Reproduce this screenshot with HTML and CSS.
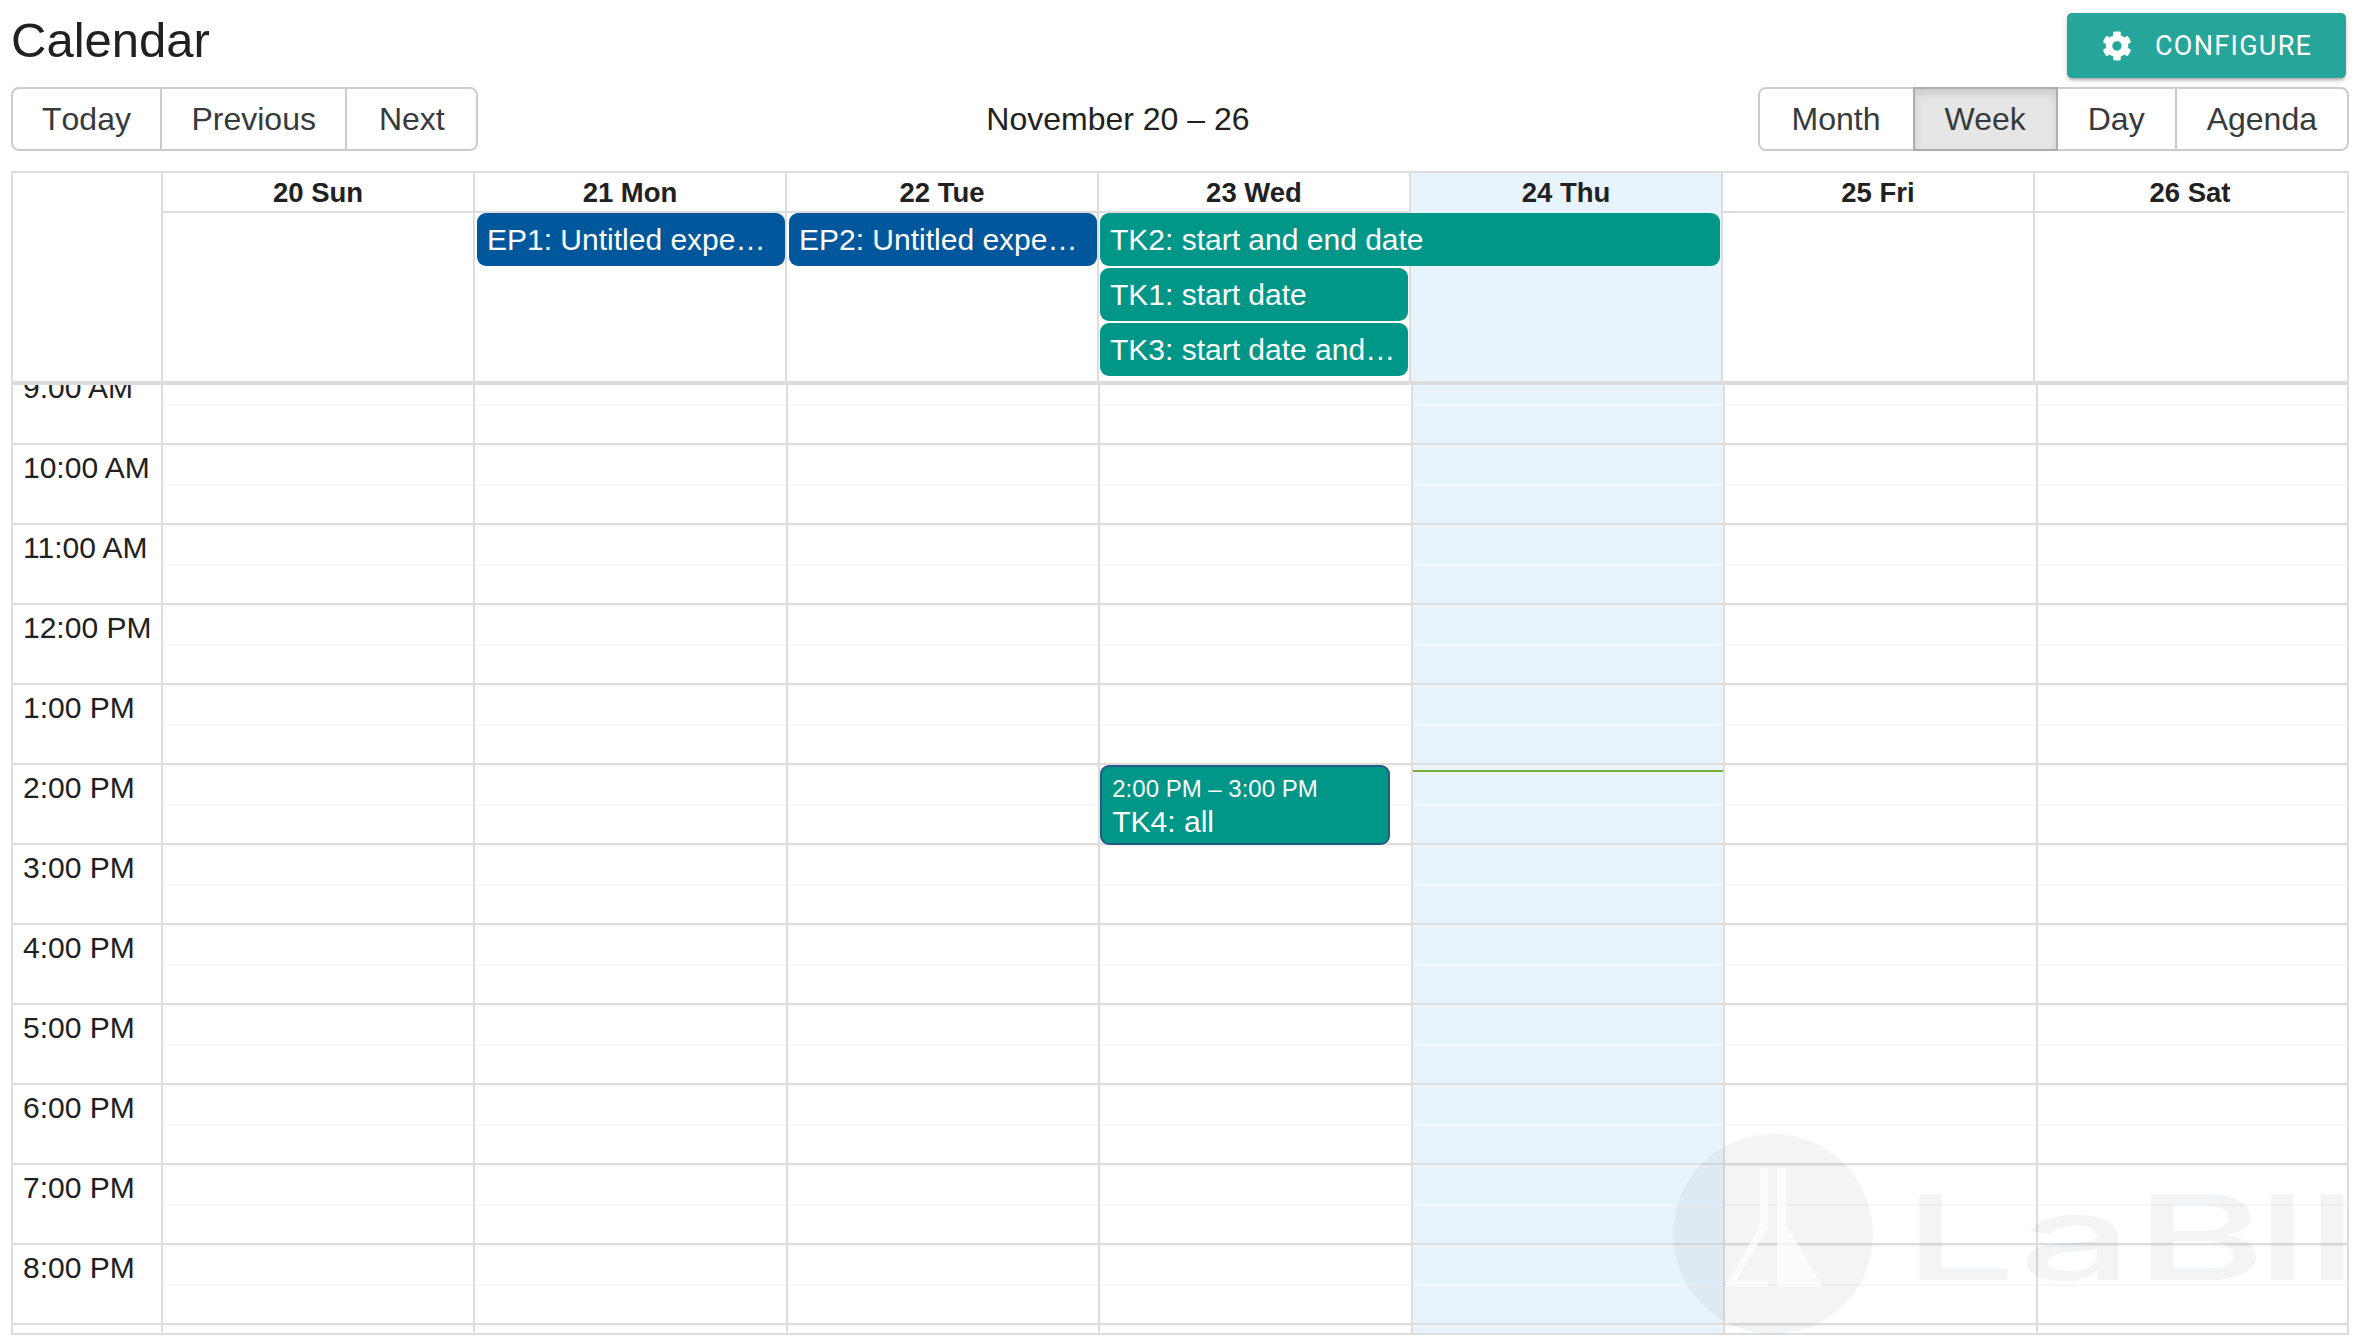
FILE: index.html
```html
<!DOCTYPE html>
<html lang="en">
<head>
<meta charset="utf-8">
<title>Calendar</title>
<link rel="stylesheet" href="styles.css">
</head>
<body>
<header class="page-head">
  <h1 class="page-title">Calendar</h1>
  <button class="configure" type="button">
    <svg class="gear" viewBox="0 0 512 512" aria-hidden="true"><path fill="currentColor" d="M487.4 315.7l-42.6-24.6c4.3-23.2 4.3-47 0-70.2l42.6-24.6c4.9-2.8 7.1-8.6 5.5-14-11.1-35.6-30-67.8-54.7-94.6-3.8-4.1-10-5.1-14.8-2.3L380.8 110c-17.9-15.4-38.5-27.3-60.8-35.1V25.8c0-5.6-3.9-10.5-9.4-11.7-36.7-8.2-74.3-7.8-109.2 0-5.5 1.2-9.4 6.1-9.4 11.7V75c-22.2 7.9-42.8 19.8-60.8 35.1L88.7 85.5c-4.9-2.8-11-1.9-14.8 2.3-24.7 26.7-43.6 58.9-54.7 94.6-1.7 5.4.6 11.2 5.5 14L67.3 221c-4.3 23.2-4.3 47 0 70.2l-42.6 24.6c-4.9 2.8-7.1 8.6-5.5 14 11.1 35.6 30 67.8 54.7 94.6 3.8 4.1 10 5.1 14.8 2.3l42.6-24.6c17.9 15.4 38.5 27.3 60.8 35.1v49.2c0 5.6 3.9 10.5 9.4 11.7 36.7 8.2 74.3 7.8 109.2 0 5.5-1.2 9.4-6.1 9.4-11.7v-49.2c22.2-7.9 42.8-19.8 60.8-35.1l42.6 24.6c4.9 2.8 11 1.9 14.8-2.3 24.7-26.7 43.6-58.9 54.7-94.6 1.5-5.5-.7-11.3-5.6-14.1zM256 336c-44.1 0-80-35.9-80-80s35.9-80 80-80 80 35.9 80 80-35.9 80-80 80z"/></svg>
    <span>CONFIGURE</span>
  </button>
</header>

<div class="toolbar">
  <div class="btn-group">
    <button class="btn btn-today" type="button">Today</button>
    <button class="btn btn-previous" type="button">Previous</button>
    <button class="btn btn-next" type="button">Next</button>
  </div>
  <div class="range">November 20 – 26</div>
  <div class="btn-group">
    <button class="btn btn-month" type="button">Month</button>
    <button class="btn active" type="button">Week</button>
    <button class="btn" type="button">Day</button>
    <button class="btn btn-agenda" type="button">Agenda</button>
  </div>
</div>

<section class="calendar">
  <div class="cal-head">
    <div class="corner"></div>
    <div class="head-main">
      <div class="head-row">
        <div class="head-cell">20 Sun</div>
        <div class="head-cell">21 Mon</div>
        <div class="head-cell">22 Tue</div>
        <div class="head-cell">23 Wed</div>
        <div class="head-cell today">24 Thu</div>
        <div class="head-cell">25 Fri</div>
        <div class="head-cell">26 Sat</div>
      </div>
      <div class="allday">
        <div class="allday-bg c1"></div>
        <div class="allday-bg c2"></div>
        <div class="allday-bg c3"></div>
        <div class="allday-bg c4"></div>
        <div class="allday-bg c5 today"></div>
        <div class="allday-bg c6"></div>
        <div class="allday-bg c7"></div>
        <div class="event blue c2 r1">EP1: Untitled experiment</div>
        <div class="event blue c3 r1">EP2: Untitled experiment</div>
        <div class="event teal span45 r1">TK2: start and end date</div>
        <div class="event teal c4 r2">TK1: start date</div>
        <div class="event teal c4 r3">TK3: start date and end date</div>
      </div>
    </div>
  </div>

  <div class="scroller">
    <div class="time-grid">
      <div class="gutter">
        <div class="hour-label">9:00 AM</div>
        <div class="hour-label">10:00 AM</div>
        <div class="hour-label">11:00 AM</div>
        <div class="hour-label">12:00 PM</div>
        <div class="hour-label">1:00 PM</div>
        <div class="hour-label">2:00 PM</div>
        <div class="hour-label">3:00 PM</div>
        <div class="hour-label">4:00 PM</div>
        <div class="hour-label">5:00 PM</div>
        <div class="hour-label">6:00 PM</div>
        <div class="hour-label">7:00 PM</div>
        <div class="hour-label">8:00 PM</div>
        <div class="hour-label">9:00 PM</div>
      </div>
      <div class="day">
        <div class="hour"></div><div class="hour"></div><div class="hour"></div><div class="hour"></div><div class="hour"></div><div class="hour"></div><div class="hour"></div><div class="hour"></div><div class="hour"></div><div class="hour"></div><div class="hour"></div><div class="hour"></div><div class="hour"></div>
      </div>
      <div class="day">
        <div class="hour"></div><div class="hour"></div><div class="hour"></div><div class="hour"></div><div class="hour"></div><div class="hour"></div><div class="hour"></div><div class="hour"></div><div class="hour"></div><div class="hour"></div><div class="hour"></div><div class="hour"></div><div class="hour"></div>
      </div>
      <div class="day">
        <div class="hour"></div><div class="hour"></div><div class="hour"></div><div class="hour"></div><div class="hour"></div><div class="hour"></div><div class="hour"></div><div class="hour"></div><div class="hour"></div><div class="hour"></div><div class="hour"></div><div class="hour"></div><div class="hour"></div>
      </div>
      <div class="day">
        <div class="hour"></div><div class="hour"></div><div class="hour"></div><div class="hour"></div><div class="hour"></div><div class="hour"></div><div class="hour"></div><div class="hour"></div><div class="hour"></div><div class="hour"></div><div class="hour"></div><div class="hour"></div><div class="hour"></div>
        <div class="timed-event">
          <div class="timed-time">2:00 PM – 3:00 PM</div>
          <div class="timed-title">TK4: all</div>
        </div>
      </div>
      <div class="day day-today">
        <div class="hour"></div><div class="hour"></div><div class="hour"></div><div class="hour"></div><div class="hour"></div><div class="hour"></div><div class="hour"></div><div class="hour"></div><div class="hour"></div><div class="hour"></div><div class="hour"></div><div class="hour"></div><div class="hour"></div>
        <div class="now-line"></div>
      </div>
      <div class="day">
        <div class="hour"></div><div class="hour"></div><div class="hour"></div><div class="hour"></div><div class="hour"></div><div class="hour"></div><div class="hour"></div><div class="hour"></div><div class="hour"></div><div class="hour"></div><div class="hour"></div><div class="hour"></div><div class="hour"></div>
      </div>
      <div class="day">
        <div class="hour"></div><div class="hour"></div><div class="hour"></div><div class="hour"></div><div class="hour"></div><div class="hour"></div><div class="hour"></div><div class="hour"></div><div class="hour"></div><div class="hour"></div><div class="hour"></div><div class="hour"></div><div class="hour"></div>
      </div>
    </div>
  </div>
</section>

<svg class="watermark" viewBox="0 0 680 204" aria-hidden="true">
  <circle class="wm-disc" cx="101" cy="102" r="100"/>
  <path class="wm-flask" d="M88 36H96V96L64 148H96V155H53L88 93Z"/>
  <path class="wm-flask" d="M105 36H114V93L151 155H105Z"/>
  <text class="wm-word" transform="translate(0 148) scale(1.7 1)" x="136 204 272 343 372" y="0">LaBII</text>
</svg>
</body>
</html>
```

FILE: styles.css
```css
* {
  box-sizing: border-box;
}

html,
body {
  height: 1344px;
  overflow: hidden;
}

body {
  position: relative;
  margin: 0;
  padding: 0 11px;
  background: #fff;
  color: #212121;
  font-family: "Liberation Sans", Arial, sans-serif;
}

.page-head {
  display: flex;
  justify-content: space-between;
  align-items: flex-start;
  height: 87px;
  padding: 13px 3px 0 0;
}

.page-title {
  margin: 0;
  font-size: 49px;
  font-weight: 400;
  line-height: 54px;
  color: #212121;
}

.configure {
  display: flex;
  align-items: center;
  gap: 23px;
  width: 279px;
  height: 65px;
  padding: 0 0 0 35px;
  border: 0;
  border-radius: 5px;
  background: #26a69a;
  box-shadow: 0 3px 3px -1px rgba(0, 0, 0, 0.25), 0 2px 6px rgba(0, 0, 0, 0.12);
  color: #fff;
  font-family: Roboto, sans-serif;
  font-size: 27px;
  font-weight: 400;
  letter-spacing: 1.3px;
}

.gear {
  width: 30px;
  height: 30px;
  flex: none;
}

.toolbar {
  display: flex;
  justify-content: space-between;
  align-items: center;
  height: 64px;
  margin-bottom: 20px;
}

.btn-group {
  display: flex;
  height: 64px;
}

.btn {
  height: 64px;
  margin-left: -2px;
  padding: 0 30px;
  border: 2px solid #ccc;
  background: #fff;
  color: #373a3c;
  font-family: inherit;
  font-size: 32px;
  line-height: 1;
}

.btn:first-child {
  margin-left: 0;
  border-radius: 8px 0 0 8px;
}

.btn:last-child {
  border-radius: 0 8px 8px 0;
}

.btn-today {
  padding: 0 29px;
  font-kerning: none;
}

.btn-previous {
  padding: 0 29.5px;
}

.btn-next {
  padding: 0 31.5px;
}

.btn-month {
  padding: 0 32px;
}

.btn.active {
  position: relative;
  border-color: #adadad;
  background: #e6e6e6;
  box-shadow: inset 0 5px 8px rgba(0, 0, 0, 0.12);
}

.range {
  font-size: 32px;
  color: #212121;
}

.calendar {
  display: flex;
  flex-direction: column;
  height: 1164px;
  border: 2px solid #ddd;
}

.cal-head {
  display: flex;
  flex: none;
  height: 212px;
  padding-right: 2px;
  border-bottom: 4px solid #ddd;
}

.corner {
  flex: none;
  width: 148px;
}

.head-main {
  display: flex;
  flex: 1;
  flex-direction: column;
  min-width: 0;
}

.head-row {
  display: grid;
  grid-template-columns: repeat(7, 1fr);
  flex: none;
  height: 40px;
  border-bottom: 2px solid #ddd;
}

.head-cell {
  border-left: 2px solid #ddd;
  font-size: 27.5px;
  font-weight: 700;
  line-height: 40px;
  text-align: center;
}

.today {
  background: #e8f4fd;
}

.allday {
  display: grid;
  flex: 1;
  grid-template-columns: repeat(7, 1fr);
  grid-template-rows: 53px 53px 53px 1fr;
  row-gap: 2px;
}

.allday-bg {
  grid-row: 1 / -1;
  border-left: 2px solid #ddd;
}

.c1 { grid-column: 1; }
.c2 { grid-column: 2; }
.c3 { grid-column: 3; }
.c4 { grid-column: 4; }
.c5 { grid-column: 5; }
.c6 { grid-column: 6; }
.c7 { grid-column: 7; }
.span45 { grid-column: 4 / 6; }
.r1 { grid-row: 1; }
.r2 { grid-row: 2; }
.r3 { grid-row: 3; }

.event {
  margin: 0 1px 0 3px;
  padding: 0 10px;
  overflow: hidden;
  border-radius: 9px;
  color: #fff;
  font-size: 30px;
  line-height: 53px;
  white-space: nowrap;
  text-overflow: ellipsis;
}

.blue {
  margin-left: 4px;
  margin-right: 0.5px;
  background: #01579b;
}

.teal {
  background: #009688;
}

.scroller {
  flex: 1;
  min-height: 0;
  overflow: hidden;
}

.time-grid {
  display: flex;
  margin: -20px -1px 0 0;
}

.gutter {
  flex: none;
  width: 148px;
}

.hour-label {
  height: 80px;
  padding: 6px 10px 0 10px;
  border-bottom: 2px solid #ddd;
  font-size: 30px;
  line-height: 34px;
  white-space: nowrap;
}

.day {
  position: relative;
  flex: 1;
  min-width: 0;
  border-left: 2px solid #ddd;
}

.day-today {
  background: #e8f4fd;
}

.hour {
  display: flex;
  flex-direction: column;
  height: 80px;
  border-bottom: 2px solid #ddd;
}

.hour::before,
.hour::after {
  content: "";
  flex: 1;
  border-top: 2px solid #f7f7f7;
}

.day-today .hour::before,
.day-today .hour::after {
  border-top-color: #f0f7fc;
}

.timed-event {
  position: absolute;
  top: 400px;
  left: 0;
  width: 290px;
  height: 80px;
  padding: 7px 10px 0;
  border: 2px solid #265985;
  border-radius: 9px;
  background: #009688;
  color: #fff;
}

.timed-time {
  margin-bottom: 1px;
  font-size: 24px;
  line-height: 29px;
}

.timed-title {
  font-size: 30px;
  line-height: 36px;
}

.now-line {
  position: absolute;
  top: 405px;
  left: 0;
  right: 0;
  height: 2px;
  background: #74ad31;
}

.watermark {
  position: absolute;
  top: 1132px;
  left: 1672px;
  width: 680px;
  height: 204px;
  pointer-events: none;
}

.wm-disc {
  fill: rgba(20, 40, 60, 0.05);
}

.wm-flask {
  fill: rgba(255, 255, 255, 0.7);
}

.wm-word {
  fill: rgba(20, 40, 60, 0.05);
  font-family: Inter, sans-serif;
  font-size: 118px;
  font-weight: 500;
}
```
